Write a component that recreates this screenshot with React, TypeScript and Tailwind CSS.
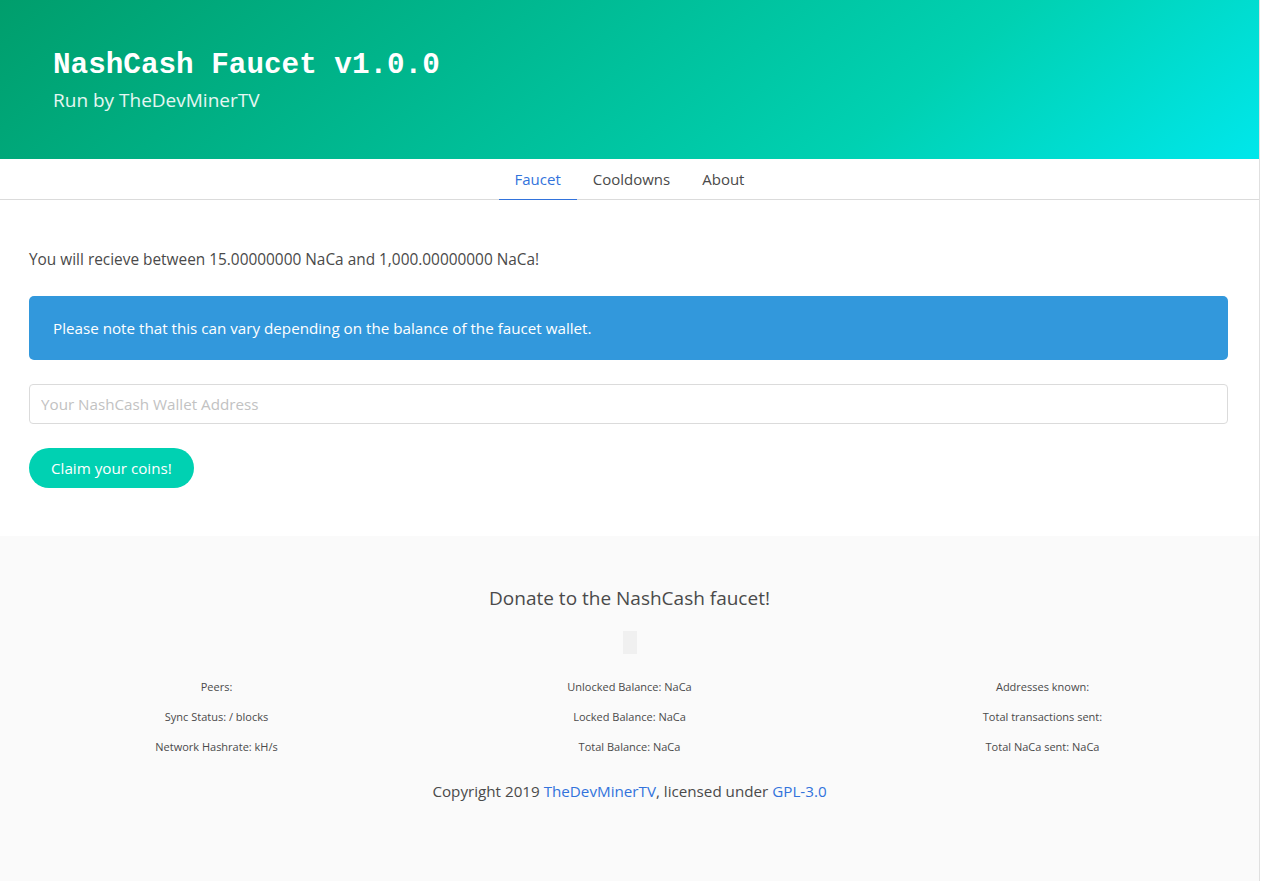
import React from 'react';

const stats = [
  ['Peers:', 'Sync Status: / blocks', 'Network Hashrate: kH/s'],
  ['Unlocked Balance: NaCa', 'Locked Balance: NaCa', 'Total Balance: NaCa'],
  ['Addresses known:', 'Total transactions sent:', 'Total NaCa sent: NaCa'],
];

export default function App() {
  return (
    <div className="min-h-[881px] bg-white text-[#4a4a4a] font-['Open_Sans',sans-serif] flex">
      <div className="w-[1260px] flex flex-col border-r border-[#e0e0e0]">
        {/* Hero */}
        <header className="h-[159px] bg-[linear-gradient(141deg,#009e6c_0%,#00d1b2_71%,#00e7eb_100%)] px-[53px] pt-[48px]">
          <h1 className="font-['Liberation_Mono',monospace] font-bold text-[29.3px] leading-[36px] text-white">
            NashCash Faucet v1.0.0
          </h1>
          <p className="mt-[2px] text-[19px] leading-[28px] text-white/90">Run by TheDevMinerTV</p>
        </header>

        {/* Tabs */}
        <nav className="h-[41px] border-b border-[#dbdbdb] flex justify-center">
          <a className="px-4 flex items-center border-b border-[#3273dc] text-[#3273dc] -mb-px text-[15px]">Faucet</a>
          <a className="px-4 flex items-center text-[15px]">Cooldowns</a>
          <a className="px-4 flex items-center text-[15px]">About</a>
        </nav>

        {/* Faucet */}
        <section className="pl-[29px] pr-[31px] pt-[48px] pb-[48px]">
          <p className="text-[15.4px] leading-[24px]">You will recieve between 15.00000000 NaCa and 1,000.00000000 NaCa!</p>
          <div className="mt-6 bg-[#3298dc] text-white rounded-[5px] py-5 pl-6 text-[15.2px] leading-[24px]">
            Please note that this can vary depending on the balance of the faucet wallet.
          </div>
          <input
            placeholder="Your NashCash Wallet Address"
            className="mt-6 block w-full h-10 border border-[#dbdbdb] rounded-[4px] px-[11px] text-[15.2px] placeholder:text-[#c2c2c2] outline-none"
          />
          <button className="mt-6 h-10 px-[22px] rounded-full bg-[#00d1b2] text-white text-[15.2px]">
            Claim your coins!
          </button>
        </section>

        {/* Footer */}
        <footer className="flex-1 bg-[#fafafa] pt-[48px] px-[10px] pb-[66px]">
          <h2 className="text-center text-[19px] leading-[28px]">Donate to the NashCash faucet!</h2>
          <div className="mx-auto mt-[19px] w-[14px] h-[23px] bg-[#f0f0f0]" />
          <div className="mt-6 grid grid-cols-3">
            {stats.map((col, i) => (
              <div key={i} className="flex flex-col gap-3 items-center text-[11px] leading-[18px]">
                {col.map((s) => (
                  <p key={s}>{s}</p>
                ))}
              </div>
            ))}
          </div>
          <p className="mt-[23px] text-center text-[15.2px] leading-[24px]">
            Copyright 2019 <a className="text-[#3273dc]">TheDevMinerTV</a>, licensed under{' '}
            <a className="text-[#3273dc]">GPL-3.0</a>
          </p>
        </footer>
      </div>
    </div>
  );
}
